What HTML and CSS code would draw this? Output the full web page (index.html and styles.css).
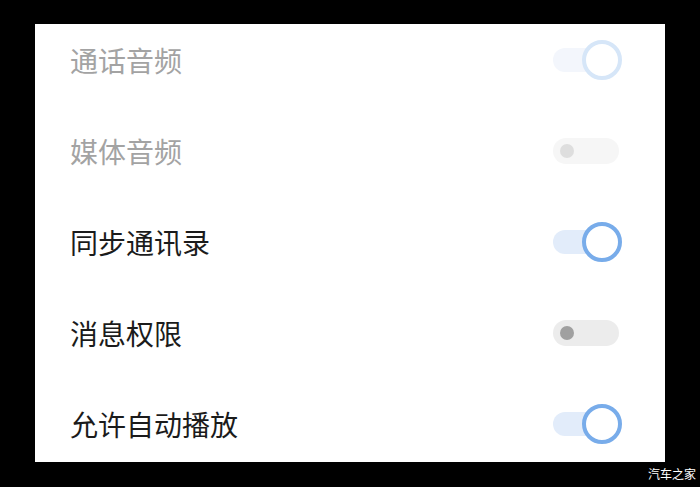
FILE: index.html
```html
<!DOCTYPE html>
<html lang="zh">
<head>
    <meta charset="UTF-8">
    <title>设置</title>
    <link rel="stylesheet" href="styles.css">
</head>
<body>
    <div class="screen">
        <div class="panel">
            <div class="list">
                <!-- 通话音频 -->
                <div class="row disabled">
                    <span class="label">通话音频</span>
                    <span class="switch on"><span class="knob"></span></span>
                </div>
                <!-- 媒体音频 -->
                <div class="row disabled">
                    <span class="label">媒体音频</span>
                    <span class="switch"><span class="knob"></span></span>
                </div>
                <div class="row">
                    <span class="label">同步通讯录</span>
                    <span class="switch on"><span class="knob"></span></span>
                </div>
                <div class="row">
                    <span class="label">消息权限</span>
                    <span class="switch"><span class="knob"></span></span>
                </div>
                <div class="row">
                    <span class="label">允许自动播放</span>
                    <span class="switch on"><span class="knob"></span></span>
                </div>
            </div>
        </div>
        <div class="mark">汽车之家</div>
    </div>
</body>
</html>
```

FILE: styles.css
```css
body {
    margin: 0;
    background: #000;
    font-family: "Noto Sans CJK SC", "Noto Sans", sans-serif;
}

.screen {
    width: 700px;
    height: 487px;
    padding-top: 24px;
    box-sizing: border-box;
    position: relative;
}

/* 白色面板 */
.panel {
    width: 630px;
    height: 438px;
    margin-left: 35px;
    background: #fff;
    overflow: hidden;
}

.list {
    margin-top: -9.5px;
}

.row {
    height: 91px;
    display: flex;
    align-items: center;
    justify-content: space-between;
    padding: 0 46px 0 35px;
}

.label {
    font-size: 28px;
    color: #1b1b1b;
}

.disabled .label {
    color: #a3a3a3;
}

/* 开关 */
.switch {
    position: relative;
    width: 66px;
    height: 26px;
    border-radius: 13px;
    background: #ececec;
}

.switch .knob {
    position: absolute;
    left: 7px;
    top: 6px;
    width: 14px;
    height: 14px;
    border-radius: 50%;
    background: #a0a0a0;
}

.switch.on {
    background: #e2ecfa;
    width: 50px;
    height: 24px;
    margin-right: 16px;
}

.switch.on .knob {
    left: 29px;
    top: -8px;
    width: 32px;
    height: 32px;
    background: #fff;
    border: 4px solid #78acea;
}

.disabled .switch {
    background: #f6f6f6;
}

.disabled .switch .knob {
    background: #dedede;
}

.disabled .switch.on {
    background: #f3f6fc;
}

.disabled .switch.on .knob {
    background: #fff;
    border-color: #d6e6f8;
}

.mark {
    position: absolute;
    right: 4px;
    bottom: 5px;
    color: #fff;
    font-size: 12px;
}
```
